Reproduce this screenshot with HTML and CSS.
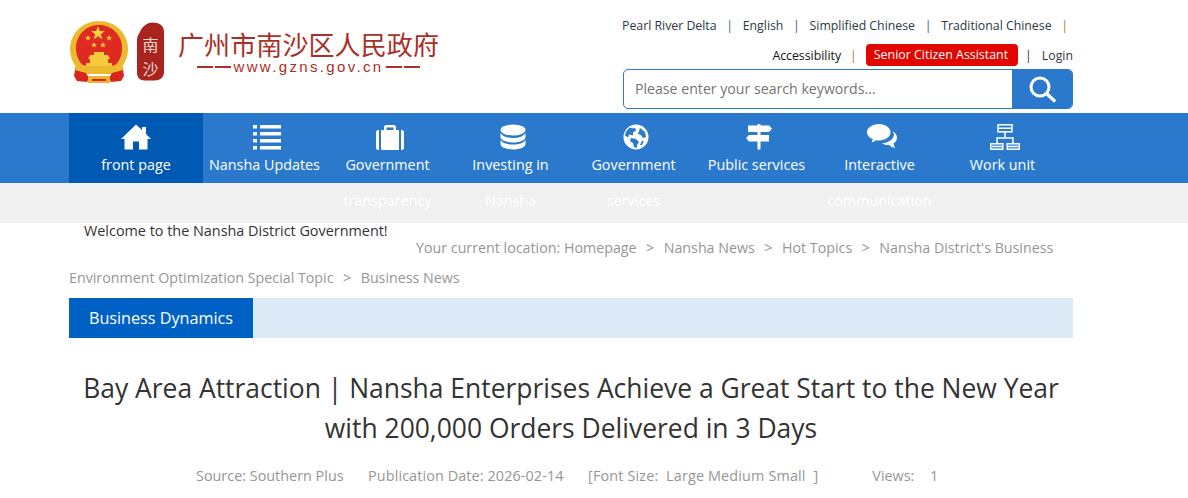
FILE: index.html
```html
<!DOCTYPE html>
<html lang="en">
<head>
<meta charset="utf-8">
<title>Nansha District Government</title>
<link rel="stylesheet" href="styles.css">
</head>
<body>
<header class="wrap head">
  <a class="logo" href="#">
    <svg class="emblem" width="58" height="62" viewBox="0 0 58 62" aria-hidden="true">
      <path d="M29 0c16 0 29 12 29 28 0 9-4 16-9 21H9C4 44 0 37 0 28 0 12 13 0 29 0z" fill="#ecb92f"/>
      <path d="M29 4c13 0 23 10 23 23 0 8-3 14-8 18H14C9 41 6 35 6 27 6 14 16 4 29 4z" fill="#de2a20"/>
      <polygon points="28,5 29.800,10 35,10 30.800,13.200 32.400,18.500 28,15.300 23.600,18.500 25.200,13.200 21,10 26.200,10" fill="#f7d23c"/>
      <polygon points="18,14 18.800,16 21,16 19.200,17.300 19.900,19.500 18,18.200 16.100,19.500 16.800,17.300 15,16 17.200,16" fill="#f7d23c"/>
      <polygon points="39,14 39.800,16 42,16 40.200,17.300 40.900,19.500 39,18.200 37.100,19.500 37.800,17.300 36,16 38.200,16" fill="#f7d23c"/>
      <polygon points="24,21 24.800,23 27,23 25.200,24.300 25.900,26.500 24,25.200 22.100,26.500 22.800,24.300 21,23 23.200,23" fill="#f7d23c"/>
      <polygon points="33,21 33.800,23 36,23 34.200,24.300 34.900,26.500 33,25.200 31.100,26.500 31.800,24.300 30,23 32.200,23" fill="#f7d23c"/>
      <path d="M24 31h10v3h4l2 4h-2v4h4v3H16v-3h4v-4h-2l2-4h4z" fill="#f6cc3c"/>
      <path d="M7 42c8 5 36 5 44 0l3 6c-3 3-8 5-10 5H14c-2 0-7-2-10-5z" fill="#eeb92e"/>
      <path d="M5 49l11 3 3 5-2 4-10-1-3-5zM53 49l-11 3-3 5 2 4 10-1 3-5z" fill="#d7261d"/>
      <rect x="18" y="55" width="22" height="7" fill="#edb42c"/>
      <rect x="22" y="58" width="14" height="2" fill="#d7261d"/>
    </svg>
    <svg class="seal" width="29" height="61" viewBox="0 0 30 62" aria-hidden="true">
      <path d="M4 11C6 6 11 1 17 1c7 0 12 3 12 10v41c0 6-4 9-10 9H9c-5 0-8-3-8-8V20c0-4 1-6 3-9z" fill="#a8241d"/>
      <text class="seal-char" x="15" y="31" text-anchor="middle">南</text>
      <text class="seal-char" x="15" y="55" text-anchor="middle">沙</text>
    </svg>
    <span class="logo-text">
      <span class="logo-cn">广州市南沙区人民政府</span>
      <span class="logo-url"><i class="dash"></i><i class="dash"></i><span>www.gzns.gov.cn</span><i class="dash"></i><i class="dash"></i></span>
    </span>
  </a>
  <div class="tools">
    <nav class="links">
      <a href="#">Pearl River Delta</a><b>|</b>
      <a href="#">English</a><b>|</b>
      <a href="#">Simplified Chinese</a><b>|</b>
      <a href="#">Traditional Chinese</a><b class="gold">|</b>
    </nav>
    <nav class="links second">
      <a class="dark" href="#">Accessibility</a><b class="gold">|</b>
      <a class="senior" href="#">Senior Citizen Assistant</a><b class="plain">|</b>
      <a href="#">Login</a>
    </nav>
    <form class="search">
      <span class="search-input">Please enter your search keywords...</span>
      <span class="search-btn">
        <svg width="28" height="28" viewBox="0 0 28 28" aria-hidden="true"><circle cx="12" cy="12" r="9" fill="none" stroke="#fff" stroke-width="3"/><path d="M18.500 18.500L26 25.500" stroke="#fff" stroke-width="3.400" stroke-linecap="round"/></svg>
      </span>
    </form>
  </div>
</header>

<div class="navband">
  <nav class="wrap nav">
    <a class="item home" href="#">
      <svg class="ico" width="30" height="26" viewBox="0 0 30 26" aria-hidden="true"><path fill="#fff" d="M15 .5L21 6V3h4v7l5 5h-3.500v10.500H18v-8h-6v8H3.500V15H0z"/></svg>
      <span>front page</span>
    </a>
    <a class="item" href="#">
      <svg class="ico" width="30" height="26" viewBox="0 0 30 26" aria-hidden="true"><path fill="#fff" d="M1 1h4v3.500H1zM8 1h21v3.500H8zM1 8h4v3.500H1zM8 8h21v3.500H8zM1 15h4v3.500H1zM8 15h21v3.500H8zM1 22h4v3.500H1zM8 22h21v3.500H8z"/></svg>
      <span>Nansha Updates</span>
    </a>
    <a class="item" href="#">
      <svg class="ico" width="30" height="26" viewBox="0 0 30 26" aria-hidden="true"><path fill="#fff" d="M1 8c0-1 1-2 2-2h1v20H3c-1 0-2-1-2-2zM6 6h3V3c0-1 1-2 2-2h8c1 0 2 1 2 2v3h3v20H6zM11.500 6h7V3.500h-7zM26 6h1c1 0 2 1 2 2v16c0 1-1 2-2 2h-1z"/></svg>
      <span>Government transparency</span>
    </a>
    <a class="item" href="#">
      <svg class="ico" width="30" height="26" viewBox="0 0 30 26" aria-hidden="true"><ellipse cx="15" cy="6" rx="12.500" ry="5.500" fill="#fff"/><path fill="#fff" d="M2.500 9c2 3 6 5 12.500 5s10.500-2 12.500-5v4c0 3-5.500 5.500-12.500 5.500S2.500 16 2.500 13zM2.500 16c2 3 6 4.500 12.500 4.500S25.500 19 27.500 16v4c0 3-5.500 5.500-12.500 5.500S2.500 23 2.500 20z"/></svg>
      <span>Investing in Nansha</span>
    </a>
    <a class="item" href="#">
      <svg class="ico" width="30" height="26" viewBox="0 0 30 26" aria-hidden="true"><circle cx="15" cy="13" r="12.500" fill="#fff"/><path fill="#2b79cd" d="M9 3.500l3 1 2-1 1 3-3 2v3l-4-1-1 3-3-2c0-3 2-6 5-8zM19 4l5 4 1 5-3 1-2-3-3-1 1-3zM10 14l5 1 3 3-2 3v3l-3-1-1-4-3-2zM21 17l2 0-2 4-2 0z"/></svg>
      <span>Government services</span>
    </a>
    <a class="item" href="#">
      <svg class="ico" width="30" height="26" viewBox="0 0 30 26" aria-hidden="true"><path fill="#fff" d="M13.500 0h3v1.500H25l3 3-3 3.500H16.500v3H25v6.500H16.500V25.500h-3V17.500H5L2 14l3-3h8.500V8H4V1.500h9.500z"/></svg>
      <span>Public services</span>
    </a>
    <a class="item" href="#">
      <svg class="ico" width="30" height="26" viewBox="0 0 30 26" aria-hidden="true"><path fill="#fff" d="M12 0c6.500 0 11.500 3.700 11.500 8.300S18.500 16.500 12 16.500c-1 0-2 0-3-.3C7.500 17.500 6 18 4.500 18.300c.7-1 1.200-2 1.300-3C2.300 13.900 0 11.300 0 8.300 0 3.700 5.500 0 12 0z"/><path fill="#fff" d="M25.500 7c2.700 2 4.500 4 4.500 6.500 0 2.500-1.200 4.600-3.500 6 .2 1.500.7 3 1.700 4.500-2.500-.5-4.700-1.500-6.200-3-2.500.3-5-.3-7-1.700 6.500-.3 12-4 12-9z"/></svg>
      <span>Interactive communication</span>
    </a>
    <a class="item" href="#">
      <svg class="ico" width="30" height="26" viewBox="0 0 30 26" aria-hidden="true"><g fill="none" stroke="#fff" stroke-width="1.500"><rect x="8" y=".800" width="14" height="7"/><rect x=".800" y="19.800" width="12" height="5.400"/><rect x="17.200" y="19.800" width="12" height="5.400"/><path d="M15 8v6M7 20v-6h16v6M8.500 4.200h13M2 22.500h10M18 22.500h10"/></g></svg>
      <span>Work unit</span>
    </a>
  </nav>
</div>
<div class="greyband"></div>

<main class="wrap">
  <div class="crumbs">
    <div class="welcome">Welcome to the Nansha District Government!</div>
    <span>Your current location: Homepage</span><i>&gt;</i><span>Nansha News</span><i>&gt;</i><span>Hot Topics</span><i>&gt;</i><span>Nansha District's Business </span><span>Environment Optimization Special Topic</span><i>&gt;</i><span>Business News</span>
  </div>
  <div class="section"><span class="section-tab">Business Dynamics</span></div>
  <h1 class="title">Bay Area Attraction | Nansha Enterprises Achieve a Great Start to the New Year with 200,000 Orders Delivered in 3 Days</h1>
  <div class="meta">
    <span>Source: Southern Plus</span>
    <span class="date">Publication Date: 2026-02-14</span>
    <span class="sizes">[Font Size:&nbsp; Large Medium Small&nbsp; ]</span>
    <span class="views">Views: &nbsp; 1</span>
  </div>
</main>
</body>
</html>
```
FILE: styles.css
```css
* { box-sizing: border-box; }
html, body { margin: 0; padding: 0; }
body {
  background: #fff;
  color: #333;
  font-family: "Open Sans", "Noto Sans", "Noto Sans CJK SC", sans-serif;
  font-size: 14px;
}
a { color: inherit; text-decoration: none; }
.wrap { width: 1004px; margin-left: 69px; }

.head { height: 113px; display: flex; justify-content: space-between; }
.logo { display: flex; align-items: flex-start; padding-top: 21px; }
.emblem { margin-left: 1px; }
.seal { margin-left: 8px; }
.seal-char { font-family: "Noto Sans CJK SC", sans-serif; font-size: 16.5px; fill: #f0d9d2; }
.logo-text { display: flex; flex-direction: column; margin-left: 13px; padding-top: 8px; }
.logo-cn {
  font-family: "Noto Sans CJK SC", sans-serif;
  font-size: 26px; line-height: 30px; letter-spacing: .1px;
  color: #a92f27; white-space: nowrap;
}
.logo-url {
  display: flex; align-items: center; justify-content: center; gap: 2px;
  font-family: "Liberation Sans", sans-serif;
  font-size: 15px; line-height: 16px; letter-spacing: 2.350px;
  color: #a92f27;
}
.dash { display: block; width: 16px; height: 2px; background: #a92f27; }

.tools { width: 450px; display: flex; flex-direction: column; align-items: flex-end; }
.links { display: flex; align-items: center; height: 40px; padding-top: 10px; font-size: 12.3px; color: #2b3a42; white-space: nowrap; }
.links b { font-weight: 400; margin: 0 9.700px; color: #33607f; }
.links b.gold { color: #b07a1e; }
.links b.gold:last-child { margin: 0 5px 0 9.700px; }
.links b.plain { color: #333; margin: 0 10px 0 7px; }
.links.second { padding-top: 1px; height: 29px; }
.links.second b.gold { margin: 0 9px 0 9px; }
.links .dark { color: #111; }
.senior { background: #e10600; color: #fff; border-radius: 4px; height: 22px; line-height: 22px; padding: 0 10px 0 8px; font-size: 12.4px; }
.search { width: 450px; height: 40px; display: flex; border: 1px solid #2b79cd; border-radius: 5px; overflow: hidden; }
.search-input { flex: 1; padding-left: 11px; line-height: 38px; font-size: 14.15px; color: #757575; }
.search-btn { width: 60px; background: #2b79cd; display: flex; align-items: center; justify-content: center; }

.navband { height: 70px; background: #2b79cd; }
.greyband { height: 40px; background: #f0f0f0; }
.nav { display: flex; height: 70px; }
.item {
  display: block; width: 123px; flex: none; height: 70px;
  color: #fff; text-align: center; font-size: 14.35px; line-height: 36px;
  padding: 11px 4px 0;
}
.item.home { width: 134px; background: #0059b2; }
.ico { display: block; margin: 0 auto -3px; height: 26px; }
.item:not(.home) .ico { transform: translateX(2px); }

.crumbs { padding-top: 10px; line-height: 30px; font-size: 14.25px; color: #969696; height: 75px; }
.welcome { float: left; width: 347px; height: 30px; margin-top: -10px; padding-left: 15px; line-height: 16px; font-size: 14.4px; color: #333; white-space: nowrap; }
.crumbs i { font-style: normal; margin: 0 9.500px; }
.section { height: 40px; background: #dce9f6; }
.section-tab { display: inline-block; width: 184px; height: 40px; background: #0061c4; color: #fff; font-size: 16.2px; line-height: 40px; text-align: center; }
.title { margin: 30px 0 0; text-align: center; font-size: 26.45px; font-weight: 400; line-height: 40px; color: #333; }
.meta { margin-top: 16px; height: 30px; padding-left: 127px; line-height: 24px; color: #969696; font-size: 14.4px; display: flex; gap: 24.500px; white-space: nowrap; }
.meta .date { letter-spacing: .1px; }
.meta .sizes { letter-spacing: .15px; }
.meta .views { margin-left: 29.500px; word-spacing: 1.500px; }
```
